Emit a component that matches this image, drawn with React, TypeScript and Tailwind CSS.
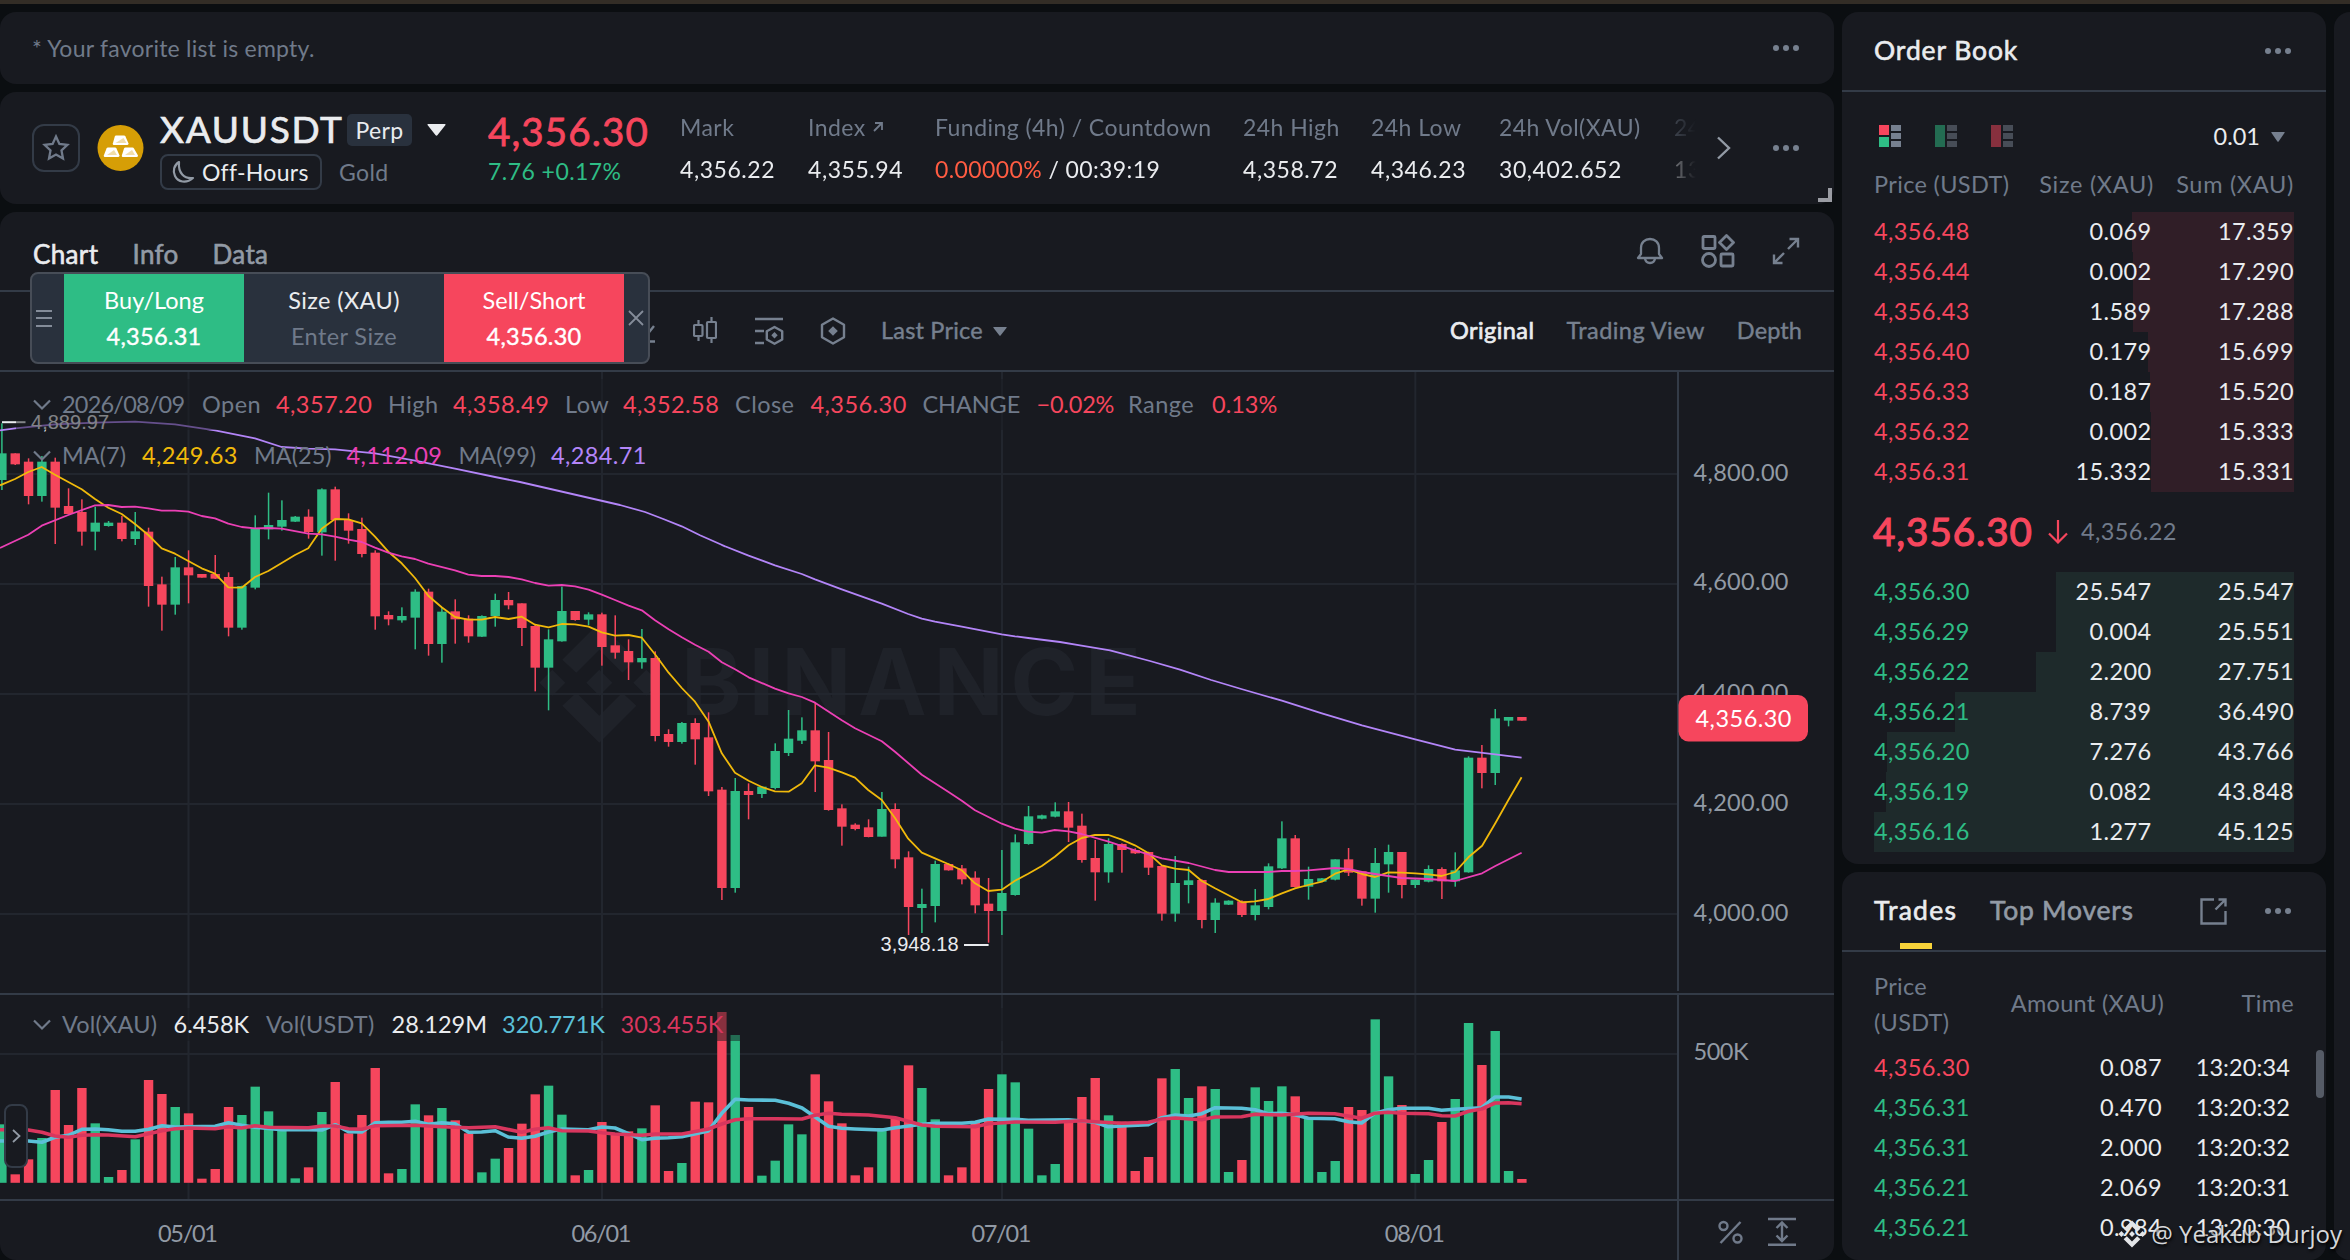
import React from "react";

const GREEN = "#2ebd85";
const RED = "#f6465d";

/* ---------- chart data ---------- */

type Candle = { up: boolean; h: number; t: number; b: number; l: number };

const parseCandles = (base: number, src: string): Candle[] =>
  src
    .trim()
    .split(/\s+/)
    .map((s) => {
      const [h, t, b, l] = s.slice(1).split(",").map((v) => base + Number(v) / 3);
      return { up: s[0] === "G", h, t, b, l };
    });

const CANDLES: Candle[] = [
  ...parseCandles(
    370,
    `G160,250,330,360 R250,250,283,285 R265,275,378,403 G258,275,378,395 R263,275,413,522 R355,408,432,432 R388,426,485,527
     G410,458,485,541 G453,458,468,470 R438,458,507,514 G426,484,507,525 R473,485,648,710 R620,643,704,782 G561,592,704,734
     R541,592,616,700 R612,612,623,623 R555,612,626,627 R607,621,773,799 G647,648,773,779 G436,475,653,658 G368,465,478,508
     G391,450,470,482 G438,440,455,456 R418,440,486,506 G355,358,487,557 R350,358,450,572 R430,450,482,521 R443,477,552,562
     R541,548,739,779 R724,735,748,766 G712,738,751,758 G658,665,743,838 R656,665,822,857 G713,725,822,878 R688,724,748,821
     R736,746,799,818 G736,738,800,801 G671,690,738,770`,
  ),
  ...parseCandles(
    540,
    `R156,180,196,208 R190,190,264,318 R253,258,383,454 G268,298,383,511 G140,213,304,305 R213,213,240,242 G217,223,239,256
     R218,223,321,377 R226,316,338,356 R298,333,367,420 G267,354,367,386 R334,354,588,604 R568,582,606,620 G546,549,606,611
     R535,549,598,674 R517,592,754,768 R741,749,1044,1080 G714,753,1044,1058 R730,753,765,838 G738,740,762,774 G610,633,744,748
     G510,596,639,648 G532,571,602,612 R487,571,664,756 R576,660,810,812 R793,805,860,917 R850,854,867,871 R838,862,891,892
     G756,807,890,890 R790,807,958,985 R934,952,1101,1185 G1046,1092,1104,1179 G962,972,1098,1147 R970,972,991,992
     R975,985,1018,1033 R994,1013,1096,1120 R1014,1091,1113,1208 G930,1059,1113,1185 G883,907,1065,1067 G798,829,912,914
     G824,826,836,838`,
  ),
  ...parseCandles(
    680,
    `G367,394,410,412 R366,394,443,486 R401,437,540,548 R480,534,577,662 G475,492,577,608 R490,492,510,578 R505,510,520,522
     R515,516,563,585 R556,558,701,722 G528,609,701,725 G560,601,615,670 R598,600,720,745 G655,668,720,759 G661,662,674,675
     R661,664,705,711 G627,676,705,721 G550,559,681,688 G424,475,565,567 R465,475,621,623 G560,597,620,659 G594,595,605,606
     G538,538,599,601 R504,538,578,588 R573,574,656,677 G504,549,656,698 G494,516,553,638 R516,516,615,655 G598,599,615,624
     G556,567,605,607 R562,567,604,657 G517,571,604,620 G229,233,577,578 R195,233,279,325 G87,115,279,315 G111,111,122,139
     R111,111,122,122`,
  ),
];

const VOLUMES = `G433 R583 R538 G474 R330 R435 R324 G430 G591 R570 G478 R300 R342 G381 R400 R596 R567 R381 G405 G320 G394 G450 G595
 R562 G396 R306 R460 R405 R264 R580 G567 G373 R406 G384 R421 R460 G577 G536 R504 R431 R343 G317 G404 R586 G570 R426 R463 R454
 G445 R376 R573 G549 R365 R367 R96 G165 R381 G587 G542 G433 G463 R283 R364 R430 R586 R562 G444 R417 R256 G324 G418 R586 R562
 R425 R327 G283 G307 G446 G586 G552 R425 R351 R294 G406 R425 R573 R531 R295 G267 G354 R319 G327 G576 R540 G322 G363 G319 R349
 G416 G576 G543 R381 R390 G118 G289 R375 G582 G540 R426 G357 G129 R255 G153 G573 R597`
  .trim()
  .split(/\s+/)
  .map((s) => ({ up: s[0] === "G", y: 980 + Number(s.slice(1)) / 3 }));

const line = (...parts: [number, number, number, string][]) =>
  parts
    .map(([ox, sx, oy, pts]) =>
      pts
        .trim()
        .split(/\s+/)
        .map((p) => {
          const [x, y] = p.split(",").map(Number);
          return `${(ox + x / sx).toFixed(1)},${(oy + y / 3).toFixed(1)}`;
        })
        .join(" "),
    )
    .join(" ");

const MA7 = line(
  [0, 3, 370, `0,346 45,327 85,306 125,291 165,314 245,358 285,387 325,413 365,432 405,462 445,495 485,535 525,551 565,573 605,595 645,611 685,652 725,653 765,621 805,603 845,579 885,555 925,535 965,476 1005,447 1045,448 1085,460 1125,500 1165,545 1205,580 1245,624 1285,677 1325,712 1365,741 1405,749 1445,749 1485,741`],
  [500, 2.8, 540, `24,237 61,230 98,254 136,262 173,252 210,253 248,260 285,277 322,287 360,285 397,293 434,343 472,398 509,444 546,485 584,545 621,640 658,698 696,722 733,741 770,754 808,755 845,730 882,676 919,683 957,697 994,713 1031,750 1069,780 1106,834 1143,896 1181,938 1218,955 1255,972 1293,991 1330,1030 1367,1053 1405,1049 1442,1022 1479,1001 1517,978`],
  [1000, 1.8233, 680, `100,530 125,496 149,474 173,465 198,465 222,479 246,496 271,520 295,556 319,566 344,570 368,603 392,625 441,667 465,664 489,657 514,640 538,625 562,615 587,605 611,581 635,568 660,582 684,591 708,577 732,578 757,580 781,583 805,588 830,576 854,532 879,497 903,430 927,360 951,292`],
);

const MA25 = line(
  [0, 3, 370, `0,534 85,494 125,467 205,435 285,406 325,405 365,411 405,410 445,415 485,422 525,422 565,425 605,438 645,445 685,461 725,471 765,475 805,474 845,476 925,491 965,493 1005,500 1045,509 1085,516 1125,533 1165,548 1205,559 1245,567 1285,581 1365,601 1405,614 1445,618 1485,618`],
  [500, 2.8, 540, `24,111 61,118 98,129 136,137 173,135 210,139 248,149 285,164 322,180 360,197 397,211 434,241 472,268 509,292 546,314 584,335 621,367 658,388 696,412 770,446 808,460 845,471 882,488 957,541 994,565 1069,604 1106,635 1181,704 1255,755 1293,782 1330,811 1405,851 1442,866 1479,875 1517,878`],
  [1000, 1.8233, 680, `100,450 125,454 149,462 198,485 246,511 271,523 295,535 344,549 392,570 417,576 489,576 514,573 538,573 562,571 611,564 635,567 660,576 684,582 732,594 781,597 830,603 879,580 903,558 951,518`],
);

const MA99 = line(
  [0, 3, 370, `0,181 45,175 165,163 285,158 405,155 525,163 645,181 765,205 845,231 925,236 1005,238 1125,250 1245,272 1365,296 1485,321 1560,336`],
  [620, 3, 300, `0,615 75,636 130,657 185,679 240,706 315,739`],
  [500, 2.8, 540, `621,15 696,47 770,76 845,102 882,118 957,148 1069,191 1143,222 1181,236 1218,245 1293,260 1405,283 1442,289 1479,294 1568,306`],
  [0, 1, 0, `1080,1936 1110,1951 1150,1983 1180,2009`],
  [1000, 1.8233, 680, `385,0 440,27 514,62 587,100 660,136 757,178 830,209 903,223 951,233`],
);

const VMA_A = line(
  [0, 2.529, 980, `0,483 72,483 106,487 139,472 173,466 207,448 241,447 274,449 308,454 342,454 376,448 410,437 443,441 477,440 544,439 578,428 611,436 645,442 713,449 780,449 814,450 848,434 881,455 915,456 949,428 982,427 1016,427 1050,424 1083,433 1117,428 1151,431 1185,457 1218,456 1252,452 1285,471 1319,475 1353,469 1387,456 1421,447 1488,449`],
  [600, 2.529, 980, `5,441 38,444 72,461 106,479 139,475 173,473 207,470 274,453 308,400 342,358 376,360 443,361 477,370 511,384 578,439 611,445 645,447 713,450 747,443 814,433 848,430 915,430 949,427 982,417 1016,418 1050,418 1083,421 1185,419 1252,427 1285,440 1319,438 1387,434 1421,413 1455,405 1488,408 1522,401`],
  [1200, 2.45, 980, `37,383 102,385 135,389 167,401 200,400 233,404 265,415 330,416 364,425 396,429 428,400 461,389 494,385 560,385 592,391 625,388 690,383 723,351 756,351 788,357`],
);

const VMA_B = line(
  [0, 2.529, 980, `0,449 72,450 106,457 139,468 173,472 207,466 241,464 274,465 342,470 376,461 410,452 443,446 477,444 544,446 578,440 611,444 645,437 679,442 780,443 814,438 848,438 881,446 915,448 949,437 1050,436 1117,440 1185,443 1252,440 1319,457 1353,448 1387,443 1421,452 1488,453`],
  [600, 2.529, 980, `5,458 38,462 106,466 139,462 207,462 274,447 308,432 342,419 376,416 443,416 511,417 544,406 578,400 611,403 679,405 747,413 814,435 848,439 949,440 982,431 1050,426 1151,427 1218,422 1252,425 1319,430 1387,427 1421,417 1455,414 1522,419`],
  [1200, 2.45, 980, `37,411 102,410 135,403 200,405 265,400 330,401 396,415 428,400 461,397 494,400 560,401 592,407 625,408 658,394 690,387 723,369 756,368 788,371`],
);

const cx = (i: number) => 1.9 + i * 13.3333;

const AXIS_PRICES: [string, number][] = [
  ["4,800.00", 472.5],
  ["4,600.00", 582],
  ["4,400.00", 692.5],
  ["4,200.00", 802.5],
  ["4,000.00", 913],
];
const AXIS_DATES: [string, number][] = [
  ["05/01", 188.5],
  ["06/01", 602],
  ["07/01", 1002],
  ["08/01", 1415.3],
];

function BinanceMark({ x, y, s, fill }: { x: number; y: number; s: number; fill: string }) {
  return (
    <g transform={`translate(${x} ${y}) scale(${s})`} fill={fill}>
      <path d="M0,-60 L37,-23 L23,-10 L0,-33 L-23,-10 L-37,-23 Z" />
      <path d="M0,60 L37,23 L23,10 L0,33 L-23,10 L-37,23 Z" />
      <path d="M0,-13 L13,0 L0,13 L-13,0 Z" />
      <path d="M-47,-13 L-34,0 L-47,13 L-60,0 Z" />
      <path d="M47,-13 L60,0 L47,13 L34,0 Z" />
    </g>
  );
}

function PriceChart() {
  return (
    <svg className="block h-[888px] w-[1834px]" viewBox="0 372 1834 888" fontFamily="Lato, sans-serif">
      <BinanceMark x={599.3} y={682.7} s={1} fill="#1f2229" />
      <text x="681" y="715" fontFamily="Inter, sans-serif" fontWeight="700" fontSize="92" textLength="460" fill="#1f2229">
        BINANCE
      </text>

      <g fill="#22262e">
        {[473, 583, 693, 803, 913, 1053].map((y) => (
          <rect key={y} x="0" y={y} width="1677" height="2" />
        ))}
        {AXIS_DATES.map(([d, x]) => (
          <rect key={d} x={x - 1} y="372" width="2" height="828" />
        ))}
      </g>

      {CANDLES.map((c, i) => {
        const f = c.up ? GREEN : RED;
        return (
          <g key={i} fill={f}>
            <rect x={cx(i) - 0.75} y={c.h} width="1.5" height={Math.max(c.l - c.h, 1)} />
            <rect x={cx(i) - 4.7} y={c.t} width="9.4" height={Math.max(c.b - c.t, 2)} />
          </g>
        );
      })}
      <g fill="none" strokeWidth="1.8" strokeLinejoin="round">
        <polyline points={MA7} stroke="#f0b90b" />
        <polyline points={MA25} stroke="#eb40b5" />
        <polyline points={MA99} stroke="#b385f8" />
      </g>

      <g fill="#eaecef" fontFamily="'Liberation Sans', sans-serif" fontSize="20">
        <rect x="2" y="421.2" width="23.5" height="2" />
        <text x="31" y="429" textLength="78">4,889.97</text>
        <text x="880.5" y="951" textLength="78">3,948.18</text>
        <rect x="964" y="944" width="24.6" height="2" />
      </g>

      {VOLUMES.map((v, i) => (
        <rect key={i} x={cx(i) - 4.7} y={v.y} width="9.4" height={1182.8 - v.y} fill={v.up ? GREEN : RED} />
      ))}
      <g fill="none" strokeWidth="3.6" strokeLinejoin="round">
        <polyline points={VMA_A} stroke="#5bc0d8" />
        <polyline points={VMA_B} stroke="#d9365e" />
      </g>

      <g fill="#333b47">
        <rect x="0" y="993" width="1834" height="2" />
        <rect x="0" y="1199" width="1834" height="2" />
        <rect x="1677" y="372" width="2" height="619" />
        <rect x="1677" y="995" width="2" height="265" />
      </g>

      <g fill="#929aa5" fontSize="23.5">
        {AXIS_PRICES.map(([p, y]) => (
          <text key={p} x="1693.5" y={y + 8} textLength="95">
            {p}
          </text>
        ))}
        <text x="1693.5" y="1060" textLength="55">500K</text>
        {AXIS_DATES.map(([d, x]) => (
          <text key={d} x={x - 30.5} y="1242" textLength="60">
            {d}
          </text>
        ))}
      </g>

      <rect x="1678.5" y="695" width="129.5" height="46.5" rx="10" fill={RED} />
      <text x="1695.5" y="726.5" fontSize="23.5" textLength="96" fill="#fff">4,356.30</text>

      <g fill="none" stroke="#707a8a" strokeWidth="2.4">
        <circle cx="1723.5" cy="1226" r="4" />
        <circle cx="1737.5" cy="1238.5" r="4" />
        <path d="M1740.5 1222 L1720.5 1243" />
        <path d="M1768 1219 h28 M1768 1244.7 h28 M1782 1223 v17.5 M1776.5 1228 l5.5 -5.5 l5.5 5.5 M1776.5 1235.5 l5.5 5.5 l5.5 -5.5" />
      </g>
    </svg>
  );
}

/* ---------- small pieces ---------- */

function Dots() {
  return (
    <svg width="26" height="6" viewBox="0 0 26 6" fill="#76808f" className="shrink-0">
      <circle cx="3" cy="3" r="3" />
      <circle cx="13" cy="3" r="3" />
      <circle cx="23" cy="3" r="3" />
    </svg>
  );
}

function Chev() {
  return (
    <svg width="18" height="12" viewBox="0 0 18 12" fill="none" stroke="#707a8a" strokeWidth="2.2" className="shrink-0">
      <path d="M1 1.5 L9 9.5 L17 1.5" />
    </svg>
  );
}

function Caret({ className, fill }: { className: string; fill: string }) {
  return (
    <svg viewBox="0 0 18 12" preserveAspectRatio="none" fill={fill} className={className}>
      <path d="M1 0 h16 q1 0 .5 1 L10 11 q-1 1.4 -2 0 L.5 1 q-.5 -1 .5 -1z" />
    </svg>
  );
}

function Stat({ label, children, className }: { label: React.ReactNode; children: React.ReactNode; className: string }) {
  return (
    <div className={`flex shrink-0 flex-col gap-3.5 whitespace-nowrap ${className}`}>
      <div className="leading-7 tracking-[0.45px] text-[#707a8a]">{label}</div>
      <div className="leading-7 tracking-[0.55px] text-[#eaecef]">{children}</div>
    </div>
  );
}

function BookIcon({ bars, dim }: { bars: string[]; dim?: boolean }) {
  return (
    <svg width="22" height="22" viewBox="0 0 22 22" opacity={dim ? 0.5 : 1}>
      {bars.length === 2 ? (
        <>
          <rect width="10" height="10" fill={bars[0]} />
          <rect y="12" width="10" height="10" fill={bars[1]} />
        </>
      ) : (
        <rect width="10" height="22" fill={bars[0]} />
      )}
      <g fill="#76808f">
        <rect x="12" width="10" height="6" />
        <rect x="12" y="8" width="10" height="6" />
        <rect x="12" y="16" width="10" height="6" />
      </g>
    </svg>
  );
}

type Row = [string, string, string, number];
const ASKS: Row[] = [
  ["4,356.48", "0.069", "17.359", 162],
  ["4,356.44", "0.002", "17.290", 161],
  ["4,356.43", "1.589", "17.288", 161],
  ["4,356.40", "0.179", "15.699", 146],
  ["4,356.33", "0.187", "15.520", 144],
  ["4,356.32", "0.002", "15.333", 143],
  ["4,356.31", "15.332", "15.331", 143],
];
const BIDS: Row[] = [
  ["4,356.30", "25.547", "25.547", 238],
  ["4,356.29", "0.004", "25.551", 238],
  ["4,356.22", "2.200", "27.751", 258],
  ["4,356.21", "8.739", "36.490", 339],
  ["4,356.20", "7.276", "43.766", 407],
  ["4,356.19", "0.082", "43.848", 408],
  ["4,356.16", "1.277", "45.125", 420],
];

function BookRows({ rows, ask }: { rows: Row[]; ask?: boolean }) {
  return (
    <div className="mx-8">
      {rows.map(([p, s, t, w]) => (
        <div key={p} className="relative flex h-10 items-center tracking-[0.4px]">
          <div className={`absolute inset-y-0 right-0 ${ask ? "bg-[#301e27]" : "bg-[#1e2a2b]"}`} style={{ width: w }} />
          <div className={`relative w-[140px] ${ask ? "text-[#f6465d]" : "text-[#2ebd85]"}`}>{p}</div>
          <div className="relative w-[137.5px] text-right">{s}</div>
          <div className="relative flex-1 text-right">{t}</div>
        </div>
      ))}
    </div>
  );
}

const TRADES: [string, string, string, boolean][] = [
  ["4,356.30", "0.087", "13:20:34", false],
  ["4,356.31", "0.470", "13:20:32", true],
  ["4,356.31", "2.000", "13:20:32", true],
  ["4,356.21", "2.069", "13:20:31", true],
  ["4,356.21", "0.984", "13:20:30", true],
];

/* ---------- panels ---------- */

function FavoritesBar() {
  return (
    <section className="flex h-[72px] items-center justify-between rounded-2xl bg-[#181a20] pr-[35px] pl-[32px]">
      <p className="text-[23px] tracking-[0.25px] text-[#707a8a]">* Your favorite list is empty.</p>
      <Dots />
    </section>
  );
}

function SymbolBar() {
  return (
    <section className="relative flex h-28 items-center rounded-2xl bg-[#181a20] pl-8">
      <div className="flex size-12 shrink-0 items-center justify-center rounded-xl border-2 border-[#333b47]">
        <svg width="28" height="28" viewBox="0 0 28 28" fill="none" stroke="#707a8a" strokeWidth="2.3" strokeLinejoin="miter">
          <path d="M14 2.500 L17.400 9.900 L25.400 10.900 L19.500 16.500 L21 24.500 L14 20.600 L7 24.500 L8.500 16.500 L2.600 10.900 L10.600 9.900z" />
        </svg>
      </div>
      <svg width="47" height="46" viewBox="0 0 47 46" className="ml-[17px] shrink-0">
        <circle cx="23.5" cy="23" r="23" fill="#d69e06" />
        <g fill="#fff">
          <path d="M19 10.5 h8 q1 0 1.5 1 l3 7 q0 1.5 -1.5 1.5 h-13 q-1.500 0 -1.200 -1.500 l2 -7 q.3 -1 1.200 -1z" />
          <path d="M11 22.500 h7 q1 0 1.500 1 l3 7 q0 1.500 -1.500 1.500 h-13 q-1.500 0 -1.200 -1.500 l2.700 -7 q.4 -1 1.500 -1z" />
          <path d="M28.500 22.500 h7 q1 0 1.500 1 l4 7 q0 1.500 -1.500 1.500 h-13.500 q-1.500 0 -1.200 -1.500 l2.200 -7 q.4 -1 1.500 -1z" />
        </g>
        <g fill="#d69e06">
          <path d="M18.500 18 l8 -5 3 5z" opacity=".35" />
          <path d="M10 30 l7 -5 3 5z" opacity=".35" />
          <path d="M28 30 l7 -5 3 5z" opacity=".35" />
        </g>
      </svg>
      <div className="mt-2 ml-4 flex w-[328px] shrink-0 flex-col gap-2">
        <div className="flex h-8 items-center">
          <div className="-mt-0.5 w-[187px] text-[37px] leading-8 tracking-[1.7px] text-[#eaecef] [-webkit-text-stroke:0.7px_#eaecef]">
            XAUUSDT
          </div>
          <div className="flex h-8 w-[65px] items-center justify-center rounded-[5px] bg-[#29313d] text-[23px] tracking-[0.4px] text-[#eaecef]">
            Perp
          </div>
          <Caret className="ml-[15px] h-3 w-[19px]" fill="#eaecef" />
        </div>
        <div className="flex h-9 items-center">
          <div className="flex h-9 w-[162px] items-center rounded-lg border-2 border-[#333b47] pl-[9px] text-[23px] tracking-[0.3px] text-[#eaecef]">
            <svg width="24" height="24" viewBox="0 0 24 24" fill="none" stroke="#929aa5" strokeWidth="2.200" strokeLinejoin="round" className="mr-[7px]">
              <path d="M8 2 C3 5 1.500 11 4 16 C7 22 15 24 22 18 C13 19 7 13 8 2z" />
            </svg>
            Off-Hours
          </div>
          <span className="ml-[17px] text-[23px] tracking-[0.4px] text-[#707a8a]">Gold</span>
        </div>
      </div>
      <div className="mt-[2px] flex w-[192px] shrink-0 flex-col gap-1">
        <div className="text-[38.500px] leading-10 tracking-[1.150px] text-[#f6465d] [-webkit-text-stroke:0.8px_#f6465d]">4,356.30</div>
        <div className="text-[23px] leading-8 tracking-[0.450px] text-[#2ebd85]">7.76 +0.17%</div>
      </div>
      <div className="-mt-px flex w-[1016px] shrink-0 overflow-hidden text-[23px] [mask-image:linear-gradient(to_right,#000_965px,transparent_1016px)]">
        <Stat className="w-[128px]" label="Mark">4,356.22</Stat>
        <Stat
          className="w-[127px]"
          label={
            <span className="flex items-center gap-[7px]">
              Index
              <svg width="10" height="10" viewBox="0 0 10 10" fill="none" stroke="#707a8a" strokeWidth="1.800">
                <path d="M1 9 L9 1 M2 1 H9 V8" />
              </svg>
            </span>
          }
        >
          4,355.94
        </Stat>
        <Stat className="w-[308px]" label="Funding (4h) / Countdown">
          <span className="tracking-[0.400px] text-[#ff5c42]">0.00000%</span>
          <span className="tracking-[0.400px]"> / 00:39:19</span>
        </Stat>
        <Stat className="w-[128px]" label="24h High">4,358.72</Stat>
        <Stat className="w-[128px]" label="24h Low">4,346.23</Stat>
        <Stat className="w-[175px]" label="24h Vol(XAU)">30,402.652</Stat>
        <Stat className="w-[140px]" label="24h Vol(USDT)">132.32M</Stat>
      </div>
      <svg width="16" height="24" viewBox="0 0 16 24" fill="none" stroke="#929aa5" strokeWidth="2.400" className="ml-[20px] shrink-0">
        <path d="M2 1.500 L13 12 L2 22.500" />
      </svg>
      <div className="ml-[41px]">
        <Dots />
      </div>
      <div className="absolute right-[2px] bottom-[2px] h-[14px] w-[14px] border-r-4 border-b-4 border-[#9a9ca3]" />
    </section>
  );
}

function ChartHeader() {
  return (
    <div className="flex h-20 items-center border-b-2 border-[#333b47] pr-[34px] pl-[33px] text-[26px]">
      <div className="flex pt-[6px] tracking-[0.350px] [-webkit-text-stroke:0.600px]">
        <span className="w-[99.500px] text-[#eaecef]">Chart</span>
        <span className="w-[80px] text-[#929aa5]">Info</span>
        <span className="text-[#929aa5]">Data</span>
      </div>
      <div className="ml-auto flex items-center gap-[37px]">
        <svg width="28" height="28" viewBox="0 0 28 28" fill="none" stroke="#76808f" strokeWidth="2.300" strokeLinejoin="round">
          <path d="M2 21 L5 17 V11 C5 5.500 9 2 14 2 C19 2 23 5.500 23 11 V17 L26 21z" />
          <path d="M9 21.500 C9.500 24.500 11.500 26 14 26 C16.500 26 18.500 24.500 19 21.500" />
        </svg>
        <svg width="34" height="34" viewBox="0 0 34 34" fill="none" stroke="#76808f" strokeWidth="2.800">
          <rect x="2" y="2.500" width="12" height="12" rx="1" />
          <path d="M25.500 1.500 L32.500 8.500 L25.500 15.500 L18.500 8.500z" strokeLinejoin="round" />
          <circle cx="8" cy="26" r="6.500" />
          <rect x="20" y="20" width="12" height="12" rx="1" />
        </svg>
        <svg width="28" height="28" viewBox="0 0 28 28" fill="none" stroke="#76808f" strokeWidth="2.400">
          <path d="M16 12 L26 2 M17.500 2 H26 V10.500 M12 16 L2 26 M2 17.500 V26 H10.500" />
        </svg>
      </div>
    </div>
  );
}

function ChartToolbar() {
  return (
    <div className="flex h-20 items-center border-b-2 border-[#333b47] pl-[634px] text-[23.500px] text-[#76808f] [-webkit-text-stroke:0.400px]">
      <svg width="22" height="22" viewBox="0 0 22 22" fill="none" stroke="#76808f" strokeWidth="2.400" className="mt-0.5">
        <path d="M1 20.500 H21 M8 12 L12 15 L20 5" />
      </svg>
      <svg width="24" height="28" viewBox="0 0 24 28" fill="none" stroke="#76808f" strokeWidth="2.200" className="ml-[37px]">
        <path d="M5.500 3 V8 M5.500 19 V24 M18.500 0 V5 M18.500 21 V26" />
        <rect x="1" y="8" width="8.500" height="11" rx="1" />
        <rect x="14" y="5" width="9" height="16" rx="1" />
      </svg>
      <svg width="29" height="28" viewBox="0 0 29 28" fill="none" stroke="#76808f" strokeWidth="2.400" className="ml-[38px]">
        <path d="M0 2 H28 M0 14 H9 M0 26 H9" />
        <path d="M19.500 10 L27.200 14.200 V22.500 L19.500 26.700 L11.800 22.500 V14.200z" strokeLinejoin="round" />
        <path d="M19.500 15 L22.700 18.200 L19.500 21.400 L16.300 18.200z" fill="#76808f" stroke="none" />
      </svg>
      <svg width="26" height="28" viewBox="0 0 26 28" fill="none" stroke="#76808f" strokeWidth="2.400" className="ml-[36px]">
        <path d="M13 1.500 L24 7.700 V20.200 L13 26.500 L2 20.200 V7.700z" strokeLinejoin="round" />
        <path d="M13 9.200 L17.800 14 L13 18.800 L8.200 14z" fill="#76808f" stroke="none" />
      </svg>
      <span className="ml-[35px] tracking-[0.200px]">Last Price</span>
      <Caret className="ml-[10px] h-[9px] w-[14px]" fill="#76808f" />
      <div className="ml-auto flex gap-[32px] pr-[32px] tracking-[0.450px]">
        <span className="text-[#eaecef] [-webkit-text-stroke:0.700px]">Original</span>
        <span>Trading View</span>
        <span className="tracking-[0.100px]">Depth</span>
      </div>
    </div>
  );
}

function QuickOrder() {
  return (
    <div className="absolute top-[60px] left-[30px] flex h-[92px] w-[620px] overflow-hidden rounded-lg border-2 border-[#474d57] bg-[#29313d] text-center text-[23.500px] text-white">
      <div className="flex w-8 flex-col items-center justify-center gap-[5.500px] pr-[10px] pl-[2px]">
        <i className="h-[2px] w-4 bg-[#848c99]" />
        <i className="h-[2px] w-4 bg-[#848c99]" />
        <i className="h-[2px] w-4 bg-[#848c99]" />
      </div>
      <div className="flex w-[180px] flex-col justify-center gap-2 bg-[#2ebd85] leading-7">
        <span>Buy/Long</span>
        <span className="tracking-[0.300px] [-webkit-text-stroke:0.400px]">4,356.31</span>
      </div>
      <div className="flex w-[200px] flex-col justify-center gap-2 leading-7 tracking-[0.400px]">
        <span className="text-[#eaecef]">Size (XAU)</span>
        <span className="text-[#707a8a]">Enter Size</span>
      </div>
      <div className="flex w-[180px] flex-col justify-center gap-2 bg-[#f6465d] leading-7">
        <span>Sell/Short</span>
        <span className="tracking-[0.300px] [-webkit-text-stroke:0.400px]">4,356.30</span>
      </div>
      <div className="flex flex-1 items-center justify-center">
        <svg width="16" height="16" viewBox="0 0 16 16" fill="none" stroke="#848c99" strokeWidth="1.800">
          <path d="M1 1 L15 15 M15 1 L1 15" />
        </svg>
      </div>
    </div>
  );
}

function Legends() {
  return (
    <div className="absolute inset-x-0 top-0 whitespace-nowrap text-[23.500px] text-[#707a8a]">
      <div className="absolute top-[7px] left-4 flex h-[51px] w-[1300px] items-center bg-[#181a20]/50 pl-[17px] tracking-[0.450px]">
        <Chev />
        <span className="ml-[11px] w-[140px] tracking-[-0.800px]">2026/08/09</span>
        <span className="w-[74px]">Open</span>
        <span className="w-[112px] text-[#f6465d]">4,357.20</span>
        <span className="w-[65px]">High</span>
        <span className="w-[112px] text-[#f6465d]">4,358.49</span>
        <span className="w-[58px]">Low</span>
        <span className="w-[112px] text-[#f6465d]">4,352.58</span>
        <span className="w-[75.500px]">Close</span>
        <span className="w-[112px] text-[#f6465d]">4,356.30</span>
        <span className="w-[114px] tracking-[-0.100px]">CHANGE</span>
        <span className="w-[91.500px] tracking-[-0.200px] text-[#f6465d]">−0.02%</span>
        <span className="w-[84px]">Range</span>
        <span className="tracking-[0px] text-[#f6465d]">0.13%</span>
      </div>
      <div className="absolute top-[70px] left-4 flex h-[28px] items-center pl-[17px]">
        <Chev />
        <span className="ml-[11px] w-[80px]">MA(7)</span>
        <span className="w-[112px] tracking-[0.400px] text-[#f0b90b]">4,249.63</span>
        <span className="w-[92.500px]">MA(25)</span>
        <span className="w-[112px] tracking-[0.400px] text-[#eb40b5]">4,112.09</span>
        <span className="w-[92.500px]">MA(99)</span>
        <span className="tracking-[0.400px] text-[#b385f8]">4,284.71</span>
      </div>
      <div className="absolute top-[636px] left-4 flex h-[33px] w-[1300px] items-center bg-[#181a20]/50 pl-[17px]">
        <Chev />
        <span className="ml-[11px] w-[111.500px] tracking-[0.200px]">Vol(XAU)</span>
        <span className="w-[92.500px] text-[#eaecef]">6.458K</span>
        <span className="w-[125.500px] tracking-[0.200px]">Vol(USDT)</span>
        <span className="w-[110.500px] text-[#eaecef]">28.129M</span>
        <span className="w-[118.500px] text-[#5bc0d8]">320.771K</span>
        <span className="text-[#d9365e]">303.455K</span>
      </div>
    </div>
  );
}

function OrderBook() {
  return (
    <section className="h-[852px] rounded-2xl bg-[#181a20] text-[23.500px] text-[#eaecef]">
      <header className="flex h-20 items-center justify-between border-b-2 border-[#333b47] pr-[33px] pl-[32px]">
        <h2 className="text-[26.500px] tracking-[0.900px] [-webkit-text-stroke:0.600px]">Order Book</h2>
        <div className="mr-[2px]">
          <Dots />
        </div>
      </header>
      <div className="flex h-[88px] items-center gap-[34px] pr-[41px] pl-[37px]">
        <BookIcon bars={[RED, GREEN]} />
        <BookIcon bars={[GREEN]} dim />
        <BookIcon bars={[RED]} dim />
        <div className="ml-auto flex items-center gap-[11px] pt-px">
          0.01
          <Caret className="h-[10px] w-[14px]" fill="#76808f" />
        </div>
      </div>
      <div className="mx-8 flex h-8 items-start leading-8 whitespace-nowrap text-[#707a8a]">
        <span className="w-[140px] -translate-y-3 tracking-[0.350px]">Price (USDT)</span>
        <span className="w-[140px] -translate-y-3 text-right tracking-[0.700px]">Size (XAU)</span>
        <span className="flex-1 -translate-y-3 text-right tracking-[0.700px]">Sum (XAU)</span>
      </div>
      <BookRows rows={ASKS} ask />
      <div className="flex h-20 items-center pl-[31px]">
        <span className="w-[175px] text-[38.500px] tracking-[1px] text-[#f6465d] [-webkit-text-stroke:1.200px_#f6465d]">4,356.30</span>
        <svg width="20" height="24" viewBox="0 0 20 24" fill="none" stroke={RED} strokeWidth="2.200">
          <path d="M10 0 V22 M1 13.500 L10 22.500 L19 13.500" />
        </svg>
        <span className="ml-[13px] tracking-[0.400px] text-[#707a8a]">4,356.22</span>
      </div>
      <BookRows rows={BIDS} />
    </section>
  );
}

function Trades() {
  return (
    <section className="relative h-[388px] overflow-hidden rounded-2xl bg-[#181a20] text-[23.500px] text-[#eaecef]">
      <header className="flex h-20 items-center border-b-2 border-[#333b47] pr-[35px] pl-[32px] text-[26.500px] [-webkit-text-stroke:0.600px]">
        <div className="relative flex h-full w-[83px] items-center tracking-[1.250px]">
          Trades
          <div className="absolute bottom-px left-[26px] h-[6px] w-8 bg-[#f8d33a]" />
        </div>
        <span className="ml-[33px] tracking-[0.750px] text-[#929aa5]">Top Movers</span>
        <svg width="27" height="27" viewBox="0 0 27 27" fill="none" stroke="#76808f" strokeWidth="2.400" className="ml-auto">
          <path d="M14 1.500 H1.500 V25.500 H25.500 V13" />
          <path d="M15.500 11.500 L25 2 M18.500 1.500 H25.500 V8.500" />
        </svg>
        <div className="ml-[38px]">
          <Dots />
        </div>
      </header>
      <div className="flex h-[96px] items-center pt-[8px] pr-8 pl-[32px] tracking-[0.300px] text-[#707a8a]">
        <span className="w-[120px] leading-9">
          Price
          <br />
          (USDT)
        </span>
        <span className="w-[170px] text-right">Amount (XAU)</span>
        <span className="flex-1 text-right">Time</span>
      </div>
      {TRADES.map(([p, a, t, up], i) => (
        <div key={i} className="flex h-10 items-center pr-9 pl-8 tracking-[0.400px]">
          <span className={`w-[140px] ${up ? "text-[#2ebd85]" : "text-[#f6465d]"}`}>{p}</span>
          <span className="w-[148px] text-right">{a}</span>
          <span className="flex-1 text-right tracking-[0.100px]">{t}</span>
        </div>
      ))}
      <div className="absolute top-[178px] right-[2px] h-12 w-2 rounded-full bg-[#555b66]" />
    </section>
  );
}

export default function App() {
  return (
    <main className="relative flex h-[1260px] w-[2350px] flex-col overflow-hidden bg-[#0b0e11] font-['Lato',sans-serif]">
      <div className="h-1 shrink-0 bg-[#332d26]" />
      <div className="flex gap-2 pt-2">
        <div className="flex w-[1834px] shrink-0 flex-col gap-2">
          <FavoritesBar />
          <SymbolBar />
          <section className="relative h-[1048px] overflow-hidden rounded-2xl bg-[#181a20]">
            <ChartHeader />
            <ChartToolbar />
            <div className="relative">
              <PriceChart />
              <Legends />
              <div className="absolute top-[732px] left-1 flex h-16 w-6 items-center justify-center rounded-lg border-2 border-[#333b47] bg-[#181a20]">
                <svg width="9" height="14" viewBox="0 0 9 14" fill="none" stroke="#929aa5" strokeWidth="1.800">
                  <path d="M1 1 L7.500 7 L1 13" />
                </svg>
              </div>
            </div>
            <QuickOrder />
          </section>
        </div>
        <div className="flex w-[484px] shrink-0 flex-col gap-2">
          <OrderBook />
          <Trades />
        </div>
        <div className="h-[1248px] w-40 shrink-0 rounded-2xl bg-[#181a20]" />
      </div>
      <div className="absolute right-2 bottom-[10px] flex items-center gap-[5px] font-['Open_Sans',sans-serif] text-[24px] leading-8 text-[#e3e5e8]/95 [text-shadow:1px_2px_3px_#000]">
        <svg width="28" height="28" viewBox="-62 -62 124 124">
          <BinanceMark x={0} y={0} s={1} fill="#e3e5e8" />
        </svg>
        <span>@ Yeakub Durjoy</span>
      </div>
    </main>
  );
}
